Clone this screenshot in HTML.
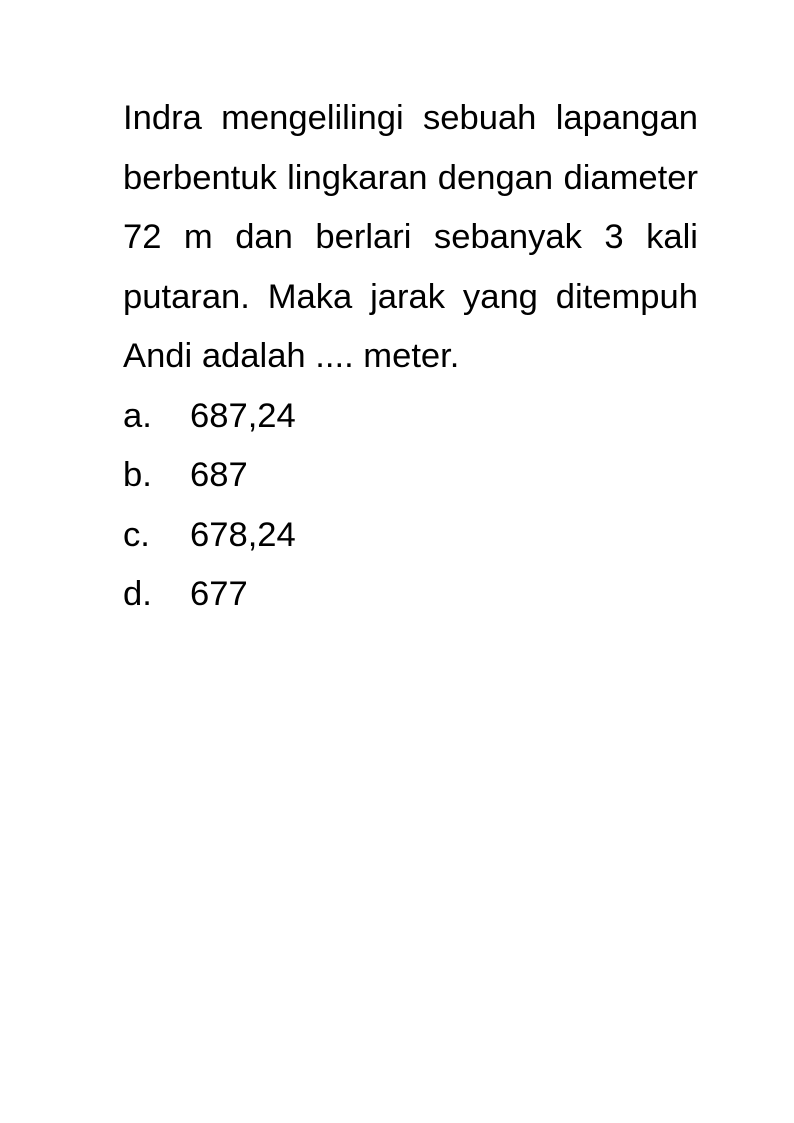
<!DOCTYPE html>
<html><head><meta charset="utf-8"><style>
body{margin:0;width:794px;height:1123px;background:#fff;font-family:"Liberation Sans",Arial,sans-serif;color:#000}
.p{position:absolute;left:123px;top:89px;width:575px;font-size:34.6px;line-height:59.5px;text-align:justify}
.o{display:flex}.o span:first-child{width:67px}
</style></head><body>
<div class="p">
<div>Indra mengelilingi sebuah lapangan berbentuk lingkaran dengan diameter 72 m dan berlari sebanyak 3 kali putaran. Maka jarak yang ditempuh Andi adalah .... meter.</div>
<div class="o"><span>a.</span><span>687,24</span></div>
<div class="o"><span>b.</span><span>687</span></div>
<div class="o"><span>c.</span><span>678,24</span></div>
<div class="o"><span>d.</span><span>677</span></div>
</div>
</body></html>
